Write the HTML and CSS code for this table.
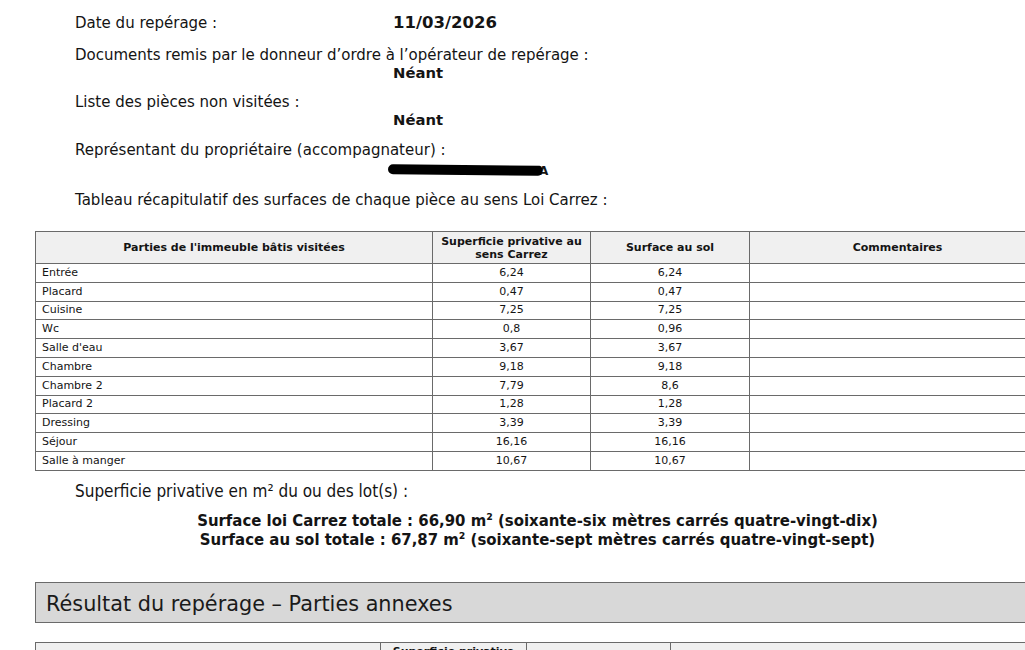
FILE: index.html
```html
<!DOCTYPE html>
<html lang="fr">
<head>
<meta charset="utf-8">
<title>Rapport Loi Carrez</title>
<link rel="stylesheet" href="styles.css">
</head>
<body>
<main class="page">
  <section class="info">
    <div class="field field-date">
      <span class="label">Date du repérage :</span>
      <span class="value date">11/03/2026</span>
    </div>
    <div class="field field-stack f-docs">
      <span class="label">Documents remis par le donneur d’ordre à l’opérateur de repérage :</span>
      <span class="value">Néant</span>
    </div>
    <div class="field field-stack f-liste">
      <span class="label">Liste des pièces non visitées :</span>
      <span class="value">Néant</span>
    </div>
    <div class="field field-stack f-rep">
      <span class="label">Représentant du propriétaire (accompagnateur) :</span>
      <span class="value redacted"><span class="ink"></span><span class="tail">A</span></span>
    </div>
    <p class="intro">Tableau récapitulatif des surfaces de chaque pièce au sens Loi Carrez :</p>
  </section>

  <table class="surfaces">
    <colgroup>
      <col class="c1"><col class="c2"><col class="c3"><col class="c4">
    </colgroup>
    <thead>
      <tr>
        <th>Parties de l'immeuble bâtis visitées</th>
        <th>Superficie privative au sens Carrez</th>
        <th>Surface au sol</th>
        <th>Commentaires</th>
      </tr>
    </thead>
    <tbody>
      <tr><td>Entrée</td><td>6,24</td><td>6,24</td><td></td></tr>
      <tr><td>Placard</td><td>0,47</td><td>0,47</td><td></td></tr>
      <tr><td>Cuisine</td><td>7,25</td><td>7,25</td><td></td></tr>
      <tr><td>Wc</td><td>0,8</td><td>0,96</td><td></td></tr>
      <tr><td>Salle d'eau</td><td>3,67</td><td>3,67</td><td></td></tr>
      <tr><td>Chambre</td><td>9,18</td><td>9,18</td><td></td></tr>
      <tr><td>Chambre 2</td><td>7,79</td><td>8,6</td><td></td></tr>
      <tr><td>Placard 2</td><td>1,28</td><td>1,28</td><td></td></tr>
      <tr><td>Dressing</td><td>3,39</td><td>3,39</td><td></td></tr>
      <tr><td>Séjour</td><td>16,16</td><td>16,16</td><td></td></tr>
      <tr><td>Salle à manger</td><td>10,67</td><td>10,67</td><td></td></tr>
    </tbody>
  </table>

  <p class="lots">Superficie privative en m² du ou des lot(s) :</p>
  <div class="totals">
    <p>Surface loi Carrez totale : 66,90 m² (soixante-six mètres carrés quatre-vingt-dix)</p>
    <p>Surface au sol totale : 67,87 m² (soixante-sept mètres carrés quatre-vingt-sept)</p>
  </div>

  <h2 class="section-title">Résultat du repérage – Parties annexes</h2>

  <table class="annexes">
    <colgroup>
      <col class="a1"><col class="a2"><col class="a3"><col class="a4">
    </colgroup>
    <thead>
      <tr>
        <th></th>
        <th>Superficie privative</th>
        <th></th>
        <th></th>
      </tr>
    </thead>
  </table>
</main>
</body>
</html>
```

FILE: styles.css
```css
* { box-sizing: border-box; }

html, body {
  margin: 0;
  padding: 0;
  background: #ffffff;
  overflow: hidden;
}

body {
  width: 1025px;
  height: 650px;
  font-family: "DejaVu Sans", Verdana, sans-serif;
  color: #141414;
}

.page {
  width: 1080px;
  padding: 14px 0 0 35px;
}

.info {
  padding-left: 40px;
  font-size: 15px;
  line-height: 18px;
}

.field {
  display: flex;
}

.field-date .label {
  width: 318px;
}

.field .value {
  font-weight: bold;
  font-size: 14.8px;
}

.field .value.date {
  font-size: 16.5px;
}

.field-stack {
  flex-direction: column;
}

.field-stack .value {
  padding-left: 318px;
}

.f-docs { margin-top: 14px; }
.f-liste { margin-top: 11px; }
.f-rep { margin-top: 12px; }

.redacted {
  display: flex;
  align-items: center;
  height: 18px;
}

.ink {
  display: block;
  width: 154px;
  height: 10px;
  margin-left: -5px;
  margin-top: 3px;
  background: #000;
  border-radius: 6px 3px 5px 6px;
  transform: rotate(0.6deg);
}

.tail {
  font-size: 12px;
  margin-left: -3px;
  margin-top: 5px;
  line-height: 1;
}

.intro {
  margin: 14px 0 0;
}

table {
  border-collapse: collapse;
  table-layout: fixed;
  font-size: 11px;
}

.surfaces {
  margin-top: 22px;
  width: 1010px;
}

.c1 { width: 397px; }
.c2 { width: 158px; }
.c3 { width: 159px; }
.c4 { width: 296px; }

th, td {
  border: 1.5px solid #6a6a6a;
  padding: 0 6px;
}

.surfaces th {
  background: #f0f0f0;
  height: 32px;
  font-weight: bold;
  line-height: 13px;
  text-align: center;
  padding: 0 4px;
}

.surfaces td {
  height: 18.8px;
  line-height: 16px;
  padding: 0 6px;
}

.surfaces td:nth-child(2),
.surfaces td:nth-child(3) {
  text-align: center;
}

.lots {
  margin: 11px 0 0 40px;
  font-family: "DejaVu Sans Condensed", "DejaVu Sans", sans-serif;
  font-size: 17px;
  line-height: 18px;
}

.totals {
  margin-top: 11px;
  margin-left: -35px;
  width: 1025px;
  padding-left: 50px;
  font-family: "DejaVu Sans Condensed", "DejaVu Sans", sans-serif;
  font-weight: bold;
  font-size: 16.6px;
  line-height: 19px;
  text-align: center;
}

.totals p { margin: 0; }

.section-title {
  margin: 33px 0 0;
  height: 41px;
  width: 1010px;
  background: #d8d8d8;
  border: 1.5px solid #6a6a6a;
  font-weight: normal;
  font-size: 20.8px;
  line-height: 42px;
  padding-left: 10px;
  color: #1a1a1a;
}

.annexes {
  margin-top: 19px;
  width: 1010px;
}

.a1 { width: 345px; }
.a2 { width: 146px; }
.a3 { width: 144px; }
.a4 { width: 375px; }

.annexes th {
  background: #f0f0f0;
  height: 32px;
  vertical-align: top;
  padding-top: 3px;
  font-weight: bold;
  line-height: 12px;
  text-align: center;
}
```
